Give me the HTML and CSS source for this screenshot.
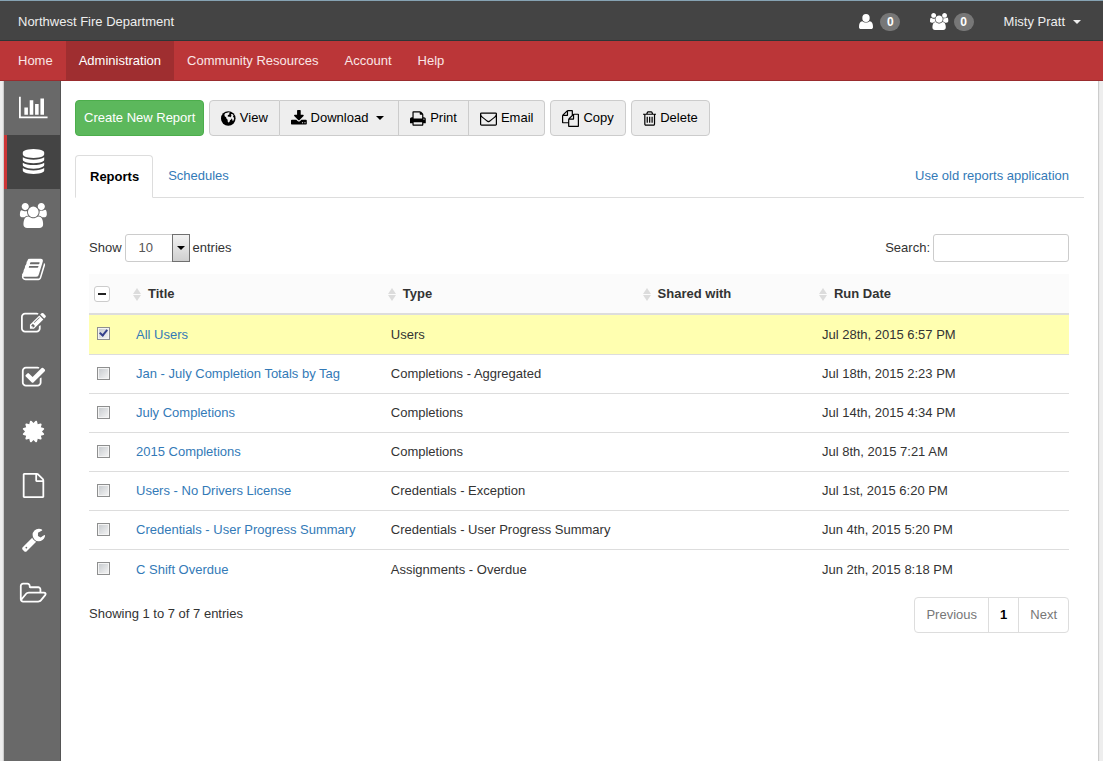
FILE: index.html
```html
<!DOCTYPE html>
<html lang="en">
<head>
<meta charset="utf-8">
<title>Reports - Northwest Fire Department</title>
<link rel="stylesheet" href="styles.css">
</head>
<body>
<header class="topbar">
  <a class="brand" href="#">Northwest Fire Department</a>
  <div class="status">
    <a class="status-item" href="#" aria-label="Active users"><svg class="icon icon-user" viewBox="0 0 16 15"><ellipse cx="7" cy="4" rx="3.700" ry="4"/><path d="M3.300 7.300c1.800 1.700 5.600 1.700 7.400 0 2.400.5 3.300 2.300 3.300 5.700 0 1.400-.8 2-2 2H2c-1.200 0-2-.6-2-2 0-3.400.9-5.200 3.300-5.700z"/></svg><span class="badge">0</span></a>
    <a class="status-item" href="#" aria-label="Active groups"><svg class="icon" viewBox="64 0 1920 1792"><use href="#users"/></svg><span class="badge">0</span></a>
    <button class="account" type="button">Misty Pratt <span class="caret"></span></button>
  </div>
</header>
<nav class="mainnav" aria-label="Main">
  <a href="#">Home</a>
  <a class="active" href="#">Administration</a>
  <a href="#">Community Resources</a>
  <a href="#">Account</a>
  <a href="#">Help</a>
</nav>
<div class="page">
  <nav class="sidebar" aria-label="Administration">
    <a href="#" aria-label="Charts"><svg viewBox="0 0 2048 1792"><path d="M640 896v512h-256v-512h256zm384-512v1024h-256v-1024h256zm1024 1152v128h-2048v-1536h128v1408h1920zm-640-896v768h-256v-768h256zm384-384v1152h-256v-1152h256z"/></svg></a>
    <a class="active" href="#" aria-label="Reports"><svg viewBox="0 0 1792 1792"><path d="M896 768q237 0 443-43t325-127v170q0 69-103 128t-280 93.500-385 34.500-385-34.500-280-93.500-103-128v-170q119 84 325 127t443 43zm0 768q237 0 443-43t325-127v170q0 69-103 128t-280 93.500-385 34.500-385-34.500-280-93.500-103-128v-170q119 84 325 127t443 43zm0-384q237 0 443-43t325-127v170q0 69-103 128t-280 93.500-385 34.500-385-34.500-280-93.500-103-128v-170q119 84 325 127t443 43zm0-1152q208 0 385 34.500t280 93.500 103 128v128q0 69-103 128t-280 93.500-385 34.500-385-34.500-280-93.500-103-128v-128q0-69 103-128t280-93.500 385-34.500z"/></svg></a>
    <a href="#" aria-label="Users"><svg viewBox="0 0 2048 1792"><path id="users" d="M657 896q-162 5-265 128h-134q-82 0-138-40.500t-56-118.500q0-353 124-353 6 0 43.500 21t97.500 42.500 119 21.500q67 0 133-23-5 37-5 66 0 159 93 293zm1071 637q0 120-73 189.500t-194 69.500h-874q-121 0-194-69.500t-73-189.500q0-53 3.500-103.500t14-109 26.500-108.500 43-97.500 62-81 85.500-53.500 111.500-20q10 0 43 21.500t73 48 107 48 135 21.500 135-21.500 107-48 73-48 43-21.500q61 0 111.500 20t85.500 53.500 62 81 43 97.500 26.500 108.500 14 109 3.500 103.500zm-1024-1277q0 106-75 181t-181 75-181-75-75-181 75-181 181-75 181 75 75 181zm704 384q0 159-112.500 271.500t-271.500 112.500-271.500-112.500-112.500-271.500 112.500-271.500 271.500-112.500 271.500 112.500 112.500 271.500zm576 225q0 78-56 118.500t-138 40.500h-134q-103-123-265-128 93-134 93-293 0-29-5-66 66 23 133 23 59 0 119-21.500t97.500-42.500 43.500-21q124 0 124 353zm-128-609q0 106-75 181t-181 75-181-75-75-181 75-181 181-75 181 75 75 181z"/></svg></a>
    <a href="#" aria-label="Courses"><svg viewBox="0 0 1792 1792"><path d="M1703 478q40 57 18 129l-275 906q-19 64-76.500 107.500t-122.500 43.500h-923q-77 0-148.500-53.500t-99.500-131.500q-24-67-2-127 0-4 3-27t4-37q1-8-3-21.500t-3-19.500q2-11 8-21t16.500-23.500 16.500-23.500q23-38 45-91.500t30-91.500q3-10 .5-30t-.5-28q3-11 17-28t17-23q21-36 42-92t25-90q1-9-2.500-32t.5-28q4-13 22-30.500t22-22.500q19-26 42.500-84.500t27.500-96.500q1-8-3-25.500t-2-26.500q2-8 9-18t18-23 17-21q8-12 16.500-30.500t15-35 16-36 19.500-32 26.500-23.500 36-11.500 47.500 5.500l-1 3q38-9 51-9h761q74 0 114 56t18 130l-274 906q-36 119-71.500 153.500t-128.500 34.500h-869q-27 0-38 15-11 16-1 43 24 70 144 70h923q29 0 56-15.500t35-41.500l300-987q7-22 5-57 38 15 59 43zm-1064 2q-4 13 2 22.500t20 9.500h608q13 0 25.500-9.500t16.500-22.500l21-64q4-13-2-22.500t-20-9.500h-608q-13 0-25.500 9.500t-16.500 22.500zm-83 256q-4 13 2 22.500t20 9.500h608q13 0 25.500-9.500t16.500-22.500l21-64q4-13-2-22.500t-20-9.500h-608q-13 0-25.500 9.500t-16.500 22.500z"/></svg></a>
    <a href="#" aria-label="Assignments"><svg viewBox="0 0 1792 1792"><path d="M888 1184l116-116-152-152-116 116v56h96v96h56zm440-720q-16-16-33 1l-350 350q-17 17-1 33t33-1l350-350q17-17 1-33zm80 594v190q0 119-84.500 203.500t-203.500 84.500h-832q-119 0-203.500-84.500t-84.500-203.500v-832q0-119 84.500-203.500t203.500-84.500h832q63 0 117 25 15 7 18 23 3 17-9 29l-49 49q-14 14-32 8-23-6-45-6h-832q-66 0-113 47t-47 113v832q0 66 47 113t113 47h832q66 0 113-47t47-113v-126q0-13 9-22l64-64q15-15 35-7t20 29zm-96-738l288 288-672 672h-288v-288zm444 132l-92 92-288-288 92-92q28-28 68-28t68 28l152 152q28 28 28 68t-28 68z"/></svg></a>
    <a href="#" aria-label="Completions"><svg viewBox="0 0 1792 1792"><path d="M1472 930v318q0 119-84.500 203.500t-203.500 84.500h-832q-119 0-203.500-84.500t-84.500-203.500v-832q0-119 84.500-203.500t203.500-84.500h832q63 0 117 25 15 7 18 23 3 17-9 29l-49 49q-10 10-23 10-3 0-9-2-23-6-45-6h-832q-66 0-113 47t-47 113v832q0 66 47 113t113 47h832q66 0 113-47t47-113v-254q0-13 9-22l64-64q10-10 23-10 6 0 12 3 20 8 20 29zm231-489l-814 814q-24 24-57 24t-57-24l-430-430q-24-24-24-57t24-57l110-110q24-24 57-24t57 24l263 263 647-647q24-24 57-24t57 24l110 110q24 24 24 57t-24 57z"/></svg></a>
    <a href="#" aria-label="Credentials"><svg viewBox="0 0 1792 1792"><path d="M1504 896l138 135q30 28 20 70-12 41-52 51l-188 48 53 186q12 41-19 70-29 31-70 19l-186-53-48 188q-10 40-51 52-12 2-19 2-31 0-51-22l-135-138-135 138q-28 30-70 20-41-11-51-52l-48-188-186 53q-41 12-70-19-31-29-19-70l53-186-188-48q-40-10-52-51-10-42 20-70l138-135-138-135q-30-28-20-70 12-41 52-51l188-48-53-186q-12-41 19-70 29-31 70-19l186 53 48-188q10-41 51-51 41-12 70 19l135 139 135-139q29-30 70-19 41 10 51 51l48 188 186-53q41-12 70 19 31 29 19 70l-53 186 188 48q40 10 52 51 10 42-20 70z"/></svg></a>
    <a href="#" aria-label="Files"><svg viewBox="0 0 1792 1792"><path d="M1596 380q28 28 48 76t20 88v1152q0 40-28 68t-68 28h-1344q-40 0-68-28t-28-68v-1600q0-40 28-68t68-28h896q40 0 88 20t76 48zm-444-244v376h376q-10-29-22-41l-313-313q-12-12-41-22zm384 1528v-1024h-416q-40 0-68-28t-28-68v-416h-768v1536h1280z"/></svg></a>
    <a href="#" aria-label="Settings"><svg viewBox="0 0 1792 1792"><path d="M448 1472q0-26-19-45t-45-19-45 19-19 45 19 45 45 19 45-19 19-45zm644-420l-682 682q-37 37-90 37-52 0-91-37l-106-108q-38-36-38-90 0-53 38-91l681-681q39 98 114.500 173.500t173.500 114.500zm634-435q0 39-23 106-47 134-164.500 217.500t-258.500 83.500q-185 0-316.500-131.500t-131.500-316.500 131.500-316.500 316.500-131.500q58 0 121.500 16.500t107.500 46.500q16 11 16 28t-16 28l-293 169v224l193 107q5-3 79-48.500t135.500-81 70.500-35.500q15 0 23.500 10t8.500 25z"/></svg></a>
    <a href="#" aria-label="Folders"><svg viewBox="0 0 2048 1792"><path d="M1845 931q0-35-53-35h-1088q-40 0-85.500 21.500t-71.500 52.500l-294 363q-18 24-18 40 0 35 53 35h1088q40 0 86-22t71-53l294-363q18-22 18-39zm-1141-163h768v-160q0-40-28-68t-68-28h-576q-40 0-68-28t-28-68v-64q0-40-28-68t-68-28h-320q-40 0-68 28t-28 68v853l256-315q44-53 116-87.500t140-34.500zm1269 163q0 62-46 120l-295 363q-43 53-116 87.500t-140 34.500h-1088q-92 0-158-66t-66-158v-960q0-92 66-158t158-66h320q92 0 158 66t66 158v32h544q92 0 158 66t66 158v160h192q54 0 99 24.500t67 70.500q15 32 15 68z"/></svg></a>
  </nav>
  <main class="content">
    <div class="toolbar">
      <button class="btn btn-create" type="button">Create New Report</button>
      <div class="btn-group">
        <button class="btn" type="button"><svg viewBox="0 0 1536 1792"><circle cx="768" cy="896" r="768"/><path class="land" d="M640 300l190-60 120 60-90 80 20 90-140 60-50 120 110 60 150 10 150 120-20 150-130 80-60 200-130 60-50-130-10-180-130-120-30-140-150-110-30-180 80-120zM1090 420l150 20 90 140-70 100 120 170-40 240-110 60-60-190-110-80-30-160 90-110-80-90z"/></svg>View</button>
        <button class="btn btn-drop" type="button"><svg viewBox="64 0 1664 1792"><path d="M1344 1344q0-26-19-45t-45-19-45 19-19 45 19 45 45 19 45-19 19-45zm256 0q0-26-19-45t-45-19-45 19-19 45 19 45 45 19 45-19 19-45zm128-224v320q0 40-28 68t-68 28h-1472q-40 0-68-28t-28-68v-320q0-40 28-68t68-28h465l135 136q58 56 136 56t136-56l136-136h464q40 0 68 28t28 68zm-325-569q17 41-14 70l-448 448q-18 19-45 19t-45-19l-448-448q-31-29-14-70 17-39 59-39h256v-448q0-26 19-45t45-19h256q26 0 45 19t19 45v448h256q42 0 59 39z"/></svg>Download<span class="caret"></span></button>
        <button class="btn" type="button"><svg viewBox="64 0 1664 1792"><path d="M448 1536h896v-256h-896v256zm0-640h896v-384h-160q-40 0-68-28t-28-68v-160h-640v640zm1152 64q0-26-19-45t-45-19-45 19-19 45 19 45 45 19 45-19 19-45zm128 0v416q0 13-9.500 22.500t-22.500 9.500h-224v160q0 40-28 68t-68 28h-960q-40 0-68-28t-28-68v-160h-224q-13 0-22.500-9.500t-9.500-22.500v-416q0-79 56.500-135.500t135.500-56.500h64v-544q0-40 28-68t68-28h672q40 0 88 20t76 48l152 152q28 28 48 76t20 88v256h64q79 0 135.500 56.500t56.500 135.500z"/></svg>Print</button>
        <button class="btn" type="button"><svg viewBox="0 0 1792 1792"><path d="M1664 1504v-768q-32 36-69 66-268 206-426 338-51 43-83 67t-86.500 48.500-102.500 24.500h-2q-48 0-102.500-24.500t-86.500-48.500-83-67q-158-132-426-338-37-30-69-66v768q0 13 9.500 22.500t22.500 9.500h1472q13 0 22.500-9.500t9.500-22.500zm0-1051v-24.500l-.5-13-3-12.500-5.500-9-9-7.500-14-2.500h-1472q-13 0-22.500 9.500t-9.500 22.500q0 168 147 284 193 152 401 317 6 5 35 29.500t46 37.500 44.500 31.500 50.500 27.500 43 9h2q20 0 43-9t50.500-27.500 44.500-31.500 46-37.500 35-29.500q208-165 401-317 54-43 100.500-115.500t46.500-131.500zm128-37v1088q0 66-47 113t-113 47h-1472q-66 0-113-47t-47-113v-1088q0-66 47-113t113-47h1472q66 0 113 47t47 113z"/></svg>Email</button>
      </div>
      <button class="btn" type="button"><svg viewBox="0 0 1792 1792"><path d="M1696 384q40 0 68 28t28 68v1216q0 40-28 68t-68 28h-960q-40 0-68-28t-28-68v-288h-544q-40 0-68-28t-28-68v-672q0-40 20-88t48-76l408-408q28-28 76-48t88-20h416q40 0 68 28t28 68v328q68-40 128-40h416zm-544 213l-299 299h299v-299zm-640-384l-299 299h299v-299zm196 647l316-316v-416h-384v416q0 40-28 68t-68 28h-416v640h512v-256q0-40 20-88t48-76zm956 804v-1152h-384v416q0 40-28 68t-68 28h-416v640h896z"/></svg>Copy</button>
      <button class="btn" type="button"><svg viewBox="192 0 1408 1792"><path d="M704 736v576q0 14-9 23t-23 9h-64q-14 0-23-9t-9-23v-576q0-14 9-23t23-9h64q14 0 23 9t9 23zm256 0v576q0 14-9 23t-23 9h-64q-14 0-23-9t-9-23v-576q0-14 9-23t23-9h64q14 0 23 9t9 23zm256 0v576q0 14-9 23t-23 9h-64q-14 0-23-9t-9-23v-576q0-14 9-23t23-9h64q14 0 23 9t9 23zm128 724v-948h-896v948q0 22 7 40.500t14.500 27 10.500 8.500h832q3 0 10.500-8.500t14.500-27 7-40.500zm-672-1076h448l-48-117q-7-9-17-11h-317q-10 2-17 11zm928 32v64q0 14-9 23t-23 9h-96v948q0 83-47 143.500t-113 60.500h-832q-66 0-113-58.500t-47-141.500v-952h-96q-14 0-23-9t-9-23v-64q0-14 9-23t23-9h309l70-167q15-37 54-63t79-26h320q40 0 79 26t54 63l70 167h309q14 0 23 9t9 23z"/></svg>Delete</button>
    </div>

    <div class="tabs">
      <a class="tab active" href="#">Reports</a>
      <a class="tab" href="#">Schedules</a>
      <a class="tab tab-right" href="#">Use old reports application</a>
    </div>

    <section class="panel">
      <div class="controls">
        <label class="control">Show
          <span class="select"><select><option>10</option><option>25</option><option>50</option></select><span class="select-arrow"></span></span>
          entries</label>
        <label class="control">Search: <input class="search" type="text"></label>
      </div>
      <table class="reports">
        <colgroup><col class="col-check"><col class="col-title"><col class="col-type"><col class="col-shared"><col></colgroup>
        <thead>
          <tr>
            <th><button class="select-all" type="button" aria-label="Clear selection"></button></th>
            <th><span class="sort"></span>Title</th>
            <th><span class="sort"></span>Type</th>
            <th><span class="sort"></span>Shared with</th>
            <th><span class="sort"></span>Run Date</th>
          </tr>
        </thead>
        <tbody>
          <tr class="selected"><td><input type="checkbox" aria-label="Select All Users" checked></td><td><a href="#">All Users</a></td><td>Users</td><td></td><td>Jul 28th, 2015 6:57 PM</td></tr>
          <tr><td><input type="checkbox" aria-label="Select Jan - July Completion Totals by Tag"></td><td><a href="#">Jan - July Completion Totals by Tag</a></td><td>Completions - Aggregated</td><td></td><td>Jul 18th, 2015 2:23 PM</td></tr>
          <tr><td><input type="checkbox" aria-label="Select July Completions"></td><td><a href="#">July Completions</a></td><td>Completions</td><td></td><td>Jul 14th, 2015 4:34 PM</td></tr>
          <tr><td><input type="checkbox" aria-label="Select 2015 Completions"></td><td><a href="#">2015 Completions</a></td><td>Completions</td><td></td><td>Jul 8th, 2015 7:21 AM</td></tr>
          <tr><td><input type="checkbox" aria-label="Select Users - No Drivers License"></td><td><a href="#">Users - No Drivers License</a></td><td>Credentials - Exception</td><td></td><td>Jul 1st, 2015 6:20 PM</td></tr>
          <tr><td><input type="checkbox" aria-label="Select Credentials - User Progress Summary"></td><td><a href="#">Credentials - User Progress Summary</a></td><td>Credentials - User Progress Summary</td><td></td><td>Jun 4th, 2015 5:20 PM</td></tr>
          <tr><td><input type="checkbox" aria-label="Select C Shift Overdue"></td><td><a href="#">C Shift Overdue</a></td><td>Assignments - Overdue</td><td></td><td>Jun 2th, 2015 8:18 PM</td></tr>
        </tbody>
      </table>
      <div class="footer">
        <p class="info">Showing 1 to 7 of 7 entries</p>
        <nav class="pager" aria-label="Pages">
          <a href="#">Previous</a>
          <a class="current" href="#">1</a>
          <a href="#">Next</a>
        </nav>
      </div>
    </section>
  </main>
</div>
</body>
</html>
```
FILE: styles.css
```css
* {
  box-sizing: border-box;
}

body {
  display: flex;
  flex-direction: column;
  min-height: 100vh;
  margin: 0;
  background: #eee;
  color: #333;
  font: 13px/20px "Liberation Sans", Arial, sans-serif;
}

a {
  color: #337ab7;
  text-decoration: none;
}

button,
input,
select {
  font: inherit;
}

.topbar {
  display: flex;
  align-items: center;
  justify-content: space-between;
  height: 41px;
  padding: 2px 22px 0 18px;
  background: #444;
  border-top: 1px solid #86a3b3;
  border-bottom: 1px solid #2c3636;
}

.brand {
  color: #eee;
}

.status,
.status-item {
  display: flex;
  align-items: center;
}

.status {
  gap: 30px;
}

.status-item {
  gap: 5px;
}

.icon {
  height: 17px;
  fill: #fff;
}

.icon-user {
  height: 15px;
}

.badge {
  width: 20px;
  border-radius: 9px;
  background: #777;
  color: #fff;
  font-size: 12px;
  font-weight: bold;
  line-height: 18px;
  text-align: center;
}

.account {
  display: flex;
  align-items: center;
  gap: 8px;
  padding: 0;
  border: 0;
  background: none;
  color: #eee;
}

.caret {
  border: 4px solid transparent;
  border-top-color: currentColor;
  border-bottom: 0;
}

.mainnav {
  display: flex;
  height: 40px;
  padding: 0 5px;
  background: #bb3638;
  border-bottom: 1px solid #9a2c2e;
}

.mainnav a {
  padding: 0 13px;
  color: #fae6e6;
  line-height: 40px;
}

.mainnav .active {
  background: #9f2e30;
  color: #fff;
}

.page {
  display: flex;
  flex: 1;
  margin: 0 5px 0 4px;
  background: #fff;
  box-shadow: 0 0 1px 1px #ccc;
  clip-path: inset(0 -2px);
}

.sidebar {
  width: 57px;
  background: #696969;
  border-right: 1px solid #555;
}

.sidebar a {
  display: flex;
  align-items: center;
  justify-content: center;
  height: 54px;
  padding: 0 0 2px 3px;
}

.sidebar .active {
  padding-left: 0;
  background: #444;
  border-left: 3px solid #cc3536;
}

.sidebar svg {
  height: 25px;
  fill: #fff;
}

.content {
  flex: 1;
  padding: 19px 14px;
}

.toolbar {
  display: flex;
  gap: 5px;
}

.btn {
  display: flex;
  align-items: center;
  gap: 4px;
  height: 36px;
  padding: 0 11px;
  border: 1px solid #ccc;
  border-radius: 4px;
  background: #eee;
  color: #000;
}

.btn svg {
  height: 17px;
}

.btn .land {
  fill: #eee;
}

.btn-create {
  padding: 0 8px;
  background: #5cb85c;
  border-color: #4cae4c;
  color: #fff;
}

.btn-drop {
  padding-right: 14px;
}

.btn-drop .caret {
  margin-left: 4px;
}

.btn-group {
  display: flex;
}

.btn-group .btn:not(:first-child) {
  border-left: 0;
  border-top-left-radius: 0;
  border-bottom-left-radius: 0;
}

.btn-group .btn:not(:last-child) {
  border-top-right-radius: 0;
  border-bottom-right-radius: 0;
}

.tabs {
  display: flex;
  margin-top: 19px;
  border-bottom: 1px solid #ddd;
}

.tab {
  margin-bottom: -1px;
  padding: 10px 14px 11px;
  border: 1px solid transparent;
}

.tab.active {
  padding: 11px 13px 10px 14px;
  background: #fff;
  border-color: #ddd;
  border-bottom-color: #fff;
  border-radius: 4px 4px 0 0;
  color: #000;
  font-weight: bold;
}

.tab-right {
  margin-left: auto;
}

.panel {
  padding: 36px 15px 0 14px;
}

.controls,
.footer {
  display: flex;
  justify-content: space-between;
}

.control {
  display: flex;
  align-items: center;
  gap: 3px;
}

.select {
  position: relative;
}

.select select,
.search {
  display: block;
  height: 28px;
  background: #fff;
  border: 1px solid #ccc;
  border-radius: 3px;
}

.select select {
  width: 65px;
  padding: 0 13px;
  appearance: none;
  color: #555;
}

.select-arrow {
  position: absolute;
  top: 0;
  right: 0;
  display: flex;
  align-items: center;
  justify-content: center;
  width: 18px;
  height: 28px;
  border: 1px solid #707070;
  background: linear-gradient(#f2f2f2, #cfcfcf);
  pointer-events: none;
}

.select-arrow::after {
  content: "";
  border: 4px solid transparent;
  border-top-color: #000;
  border-bottom: 0;
}

.search {
  width: 136px;
  padding: 0 8px;
}

.reports {
  width: 100%;
  margin-top: 12px;
  border-collapse: separate;
  border-spacing: 0;
  table-layout: fixed;
}

.col-check {
  width: 39px;
}

.col-title,
.col-type {
  width: 26%;
}

.col-shared {
  width: 18%;
}

.reports th {
  height: 41px;
  padding: 0 5px;
  background: #fbfbfb;
  border-bottom: 2px solid #ddd;
  text-align: left;
}

.reports td {
  height: 39px;
  padding: 0 8px;
  border-bottom: 1px solid #ddd;
}

.reports tbody tr:last-child td {
  border-bottom: 0;
}

.reports .selected td {
  height: 40px;
  background: #ffffb0;
}

.reports input {
  display: block;
  width: 13px;
  height: 13px;
  margin: 0 0 2px;
  appearance: none;
  border: 1px solid #8e8f8f;
  background: linear-gradient(135deg, #c4c8cc, #f6f6f6);
  box-shadow: inset 0 0 0 1px #f4f4f4;
}

.reports input:checked::after {
  content: "";
  display: block;
  width: 3px;
  height: 6px;
  margin-left: 3px;
  border: solid #35418c;
  border-width: 0 2px 2px 0;
  transform: rotate(40deg);
}

.select-all {
  display: flex;
  align-items: center;
  justify-content: center;
  width: 16px;
  height: 16px;
  padding: 0;
  border: 1px solid #ccc;
  border-radius: 3px;
  background: #fff;
}

.select-all::after {
  content: "";
  width: 8px;
  height: 2px;
  background: #222;
}

.sort {
  display: inline-flex;
  flex-direction: column;
  gap: 1px;
  margin-right: 7px;
  vertical-align: middle;
}

.sort::before,
.sort::after {
  content: "";
  border: 4px solid transparent;
}

.sort::before {
  border-top: 0;
  border-bottom: 6px solid #dcdcdc;
}

.sort::after {
  border-bottom: 0;
  border-top: 6px solid #dcdcdc;
}

.footer {
  padding-top: 8px;
}

.info {
  margin: 7px 0;
}

.pager {
  display: flex;
  border: 1px solid #ddd;
  border-radius: 4px;
}

.pager a {
  padding: 0 11px;
  color: #777;
  line-height: 34px;
}

.pager a + a {
  border-left: 1px solid #ddd;
}

.pager .current {
  color: #000;
  font-weight: bold;
}
```
